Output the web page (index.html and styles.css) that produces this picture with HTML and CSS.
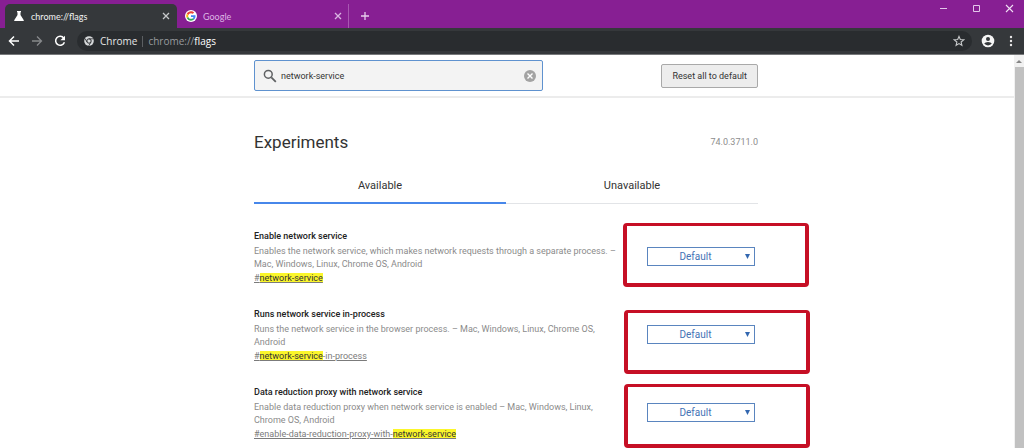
FILE: index.html
```html
<!DOCTYPE html>
<html lang="en">
<head>
<meta charset="utf-8">
<meta name="viewport" content="width=device-width, initial-scale=1">
<title>chrome://flags</title>
<link rel="stylesheet" href="styles.css">
</head>
<body>
<div class="window">
  <header class="tabstrip">
    <div class="tab tab-active">
      <svg class="tab-icon" viewBox="0 0 12 12"><path d="M4 1h4v1.200H7.500V5l3.300 5.200q.4.800-.5.800H1.700q-.9 0-.5-.8L4.500 5V2.200H4z" fill="#fff"/></svg>
      <span class="tab-title">chrome://flags</span>
      <button class="tab-close" aria-label="Close tab"><svg viewBox="0 0 8 8"><path d="M1 1l6 6M7 1L1 7" stroke="#c6c8ca" stroke-width="1.300"/></svg></button>
    </div>
    <div class="tab tab-google">
      <svg class="tab-icon" viewBox="0 0 48 48"><circle cx="24" cy="24" r="24" fill="#fff"/><g transform="translate(5 5) scale(.79)"><path fill="#ea4335" d="M24 9.500c3.500 0 6.700 1.200 9.200 3.600l6.900-6.900C35.900 2.400 30.500 0 24 0 14.600 0 6.500 5.400 2.600 13.200l8 6.200C12.400 13.700 17.700 9.500 24 9.500z"/><path fill="#4285f4" d="M47 24.600c0-1.600-.2-3.100-.4-4.600H24v9h12.900c-.6 3-2.300 5.500-4.800 7.200l7.700 6C44.400 38 47 31.800 47 24.600z"/><path fill="#fbbc05" d="M10.500 28.600a14.500 14.500 0 0 1 0-9.200l-8-6.200a24 24 0 0 0 0 21.600z"/><path fill="#34a853" d="M24 48c6.500 0 11.900-2.100 15.900-5.800l-7.700-6c-2.200 1.500-4.900 2.300-8.200 2.300-6.300 0-11.600-4.200-13.500-9.900l-8 6.200C6.500 42.600 14.600 48 24 48z"/></g></svg>
      <span class="tab-title">Google</span>
      <button class="tab-close" aria-label="Close tab"><svg viewBox="0 0 8 8"><path d="M1 1l6 6M7 1L1 7" stroke="#d9b5e2" stroke-width="1.300"/></svg></button>
    </div>
    <button class="new-tab" aria-label="New tab"><svg viewBox="0 0 10 10"><path d="M5 1v8M1 5h8" stroke="#e6cdec" stroke-width="1.300"/></svg></button>
    <div class="window-controls">
      <button aria-label="Minimize"><svg viewBox="0 0 9 9"><path d="M1 4.500h7" stroke="#e3c6ea"/></svg></button>
      <button aria-label="Maximize"><svg viewBox="0 0 9 9"><path d="M1.500 1.500h6v6h-6z" fill="none" stroke="#e3c6ea"/></svg></button>
      <button aria-label="Close window"><svg viewBox="0 0 9 9"><path d="M1 1l7 7M8 1L1 8" stroke="#f0dff4" stroke-width="1.100"/></svg></button>
    </div>
  </header>

  <nav class="toolbar">
    <button class="nav-button" aria-label="Back"><svg viewBox="0 0 12 12"><path d="M11 6H2M6 1.500L1.500 6 6 10.500" fill="none" stroke="#fff" stroke-width="1.500"/></svg></button>
    <button class="nav-button" aria-label="Forward"><svg viewBox="0 0 12 12"><path d="M1 6h9M6 1.500L10.500 6 6 10.500" fill="none" stroke="#86898b" stroke-width="1.300"/></svg></button>
    <button class="nav-button" aria-label="Reload"><svg viewBox="0 0 12 12"><path d="M9.800 3.200A4.500 4.500 0 1 0 10.400 7.300" fill="none" stroke="#fff" stroke-width="1.500"/><path d="M11 .7v4.600H6.400z" fill="#fff"/></svg></button>
    <div class="omnibox">
      <svg class="site-icon" viewBox="0 0 12 12"><circle cx="6" cy="6" r="4.800" fill="#d6d8da"/><circle cx="6" cy="6" r="2.200" fill="#d6d8da" stroke="#292c2f" stroke-width="1"/><path d="M6 3.800h4.400M4.100 7.100L1.900 3.400M7.900 7.100L5.800 10.700" stroke="#292c2f" stroke-width=".8"/></svg>
      <span class="site-name">Chrome</span>
      <span class="omnibox-rule"></span>
      <span class="url">chrome://<span class="url-host">flags</span></span>
      <button class="star" aria-label="Bookmark this tab"><svg viewBox="0 0 12 12"><path d="M6 1.400l1.300 3.100 3.400.3-2.600 2.200.8 3.300L6 8.600l-2.900 1.700.8-3.300L1.300 4.800l3.400-.3z" fill="none" stroke="#c7c9cb" stroke-width="1.100"/></svg></button>
    </div>
    <button class="profile" aria-label="Profile"><svg viewBox="0 0 14 14"><circle cx="7" cy="7" r="6.300" fill="#f5f5f5"/><circle cx="7" cy="4.900" r="2" fill="#35383b"/><path d="M3.200 9.600Q4.200 8 7 8t3.800 1.600Q9.500 11.400 7 11.400T3.200 9.600z" fill="#35383b"/></svg></button>
    <button class="menu" aria-label="Menu"><svg viewBox="0 0 4 12"><g fill="#e8e8e8"><circle cx="2" cy="2" r="1.200"/><circle cx="2" cy="6" r="1.200"/><circle cx="2" cy="10" r="1.200"/></g></svg></button>
  </nav>

  <div class="viewport">
    <main class="page">
      <div class="page-header">
        <div class="column header-row">
          <div class="search">
            <svg class="search-icon" viewBox="0 0 14 14"><circle cx="5.300" cy="5.300" r="3.900" fill="none" stroke="#5f6163" stroke-width="1.500"/><path d="M8.300 8.300l4.500 4.500" stroke="#5f6163" stroke-width="1.800"/></svg>
            <input class="search-input" type="text" aria-label="Search flags" value="network-service">
            <button class="clear" aria-label="Clear search"><svg viewBox="0 0 12 12"><circle cx="6" cy="6" r="6" fill="#a3a3a3"/><path d="M3.500 3.500l5 5M8.500 3.500l-5 5" stroke="#fff" stroke-width="1.400"/></svg></button>
          </div>
          <button class="reset">Reset all to default</button>
        </div>
      </div>

      <div class="column">
        <div class="heading-row">
          <h1 class="heading">Experiments</h1>
          <span class="version">74.0.3711.0</span>
        </div>
        <div class="flag-tabs" role="tablist">
          <button class="flag-tab flag-tab-selected" role="tab" aria-selected="true">Available</button>
          <button class="flag-tab" role="tab" aria-selected="false">Unavailable</button>
        </div>

        <div class="flags">
          <section class="flag">
            <div class="flag-text">
              <h2 class="flag-title" id="flag-1">Enable network service</h2>
              <p class="flag-description">Enables the network service, which makes network requests through a separate process. – Mac, Windows, Linux, Chrome OS, Android</p>
              <a class="flag-link" href="#network-service">#<mark>network-service</mark></a>
            </div>
            <div class="flag-choice">
              <select class="flag-select" aria-labelledby="flag-1"><option>Default</option><option>Enabled</option><option>Disabled</option></select>
              <svg class="arrow" viewBox="0 0 5 5"><path d="M0 0h5L2.500 5z" fill="#3367b0"/></svg>
              <span class="highlight highlight-first"></span>
            </div>
          </section>
          <section class="flag">
            <div class="flag-text">
              <h2 class="flag-title" id="flag-2">Runs network service in-process</h2>
              <p class="flag-description">Runs the network service in the browser process. – Mac, Windows, Linux, Chrome OS, Android</p>
              <a class="flag-link" href="#network-service-in-process">#<mark>network-service</mark>-in-process</a>
            </div>
            <div class="flag-choice">
              <select class="flag-select" aria-labelledby="flag-2"><option>Default</option><option>Enabled</option><option>Disabled</option></select>
              <svg class="arrow" viewBox="0 0 5 5"><path d="M0 0h5L2.500 5z" fill="#3367b0"/></svg>
              <span class="highlight highlight-second"></span>
            </div>
          </section>
          <section class="flag">
            <div class="flag-text">
              <h2 class="flag-title" id="flag-3">Data reduction proxy with network service</h2>
              <p class="flag-description">Enable data reduction proxy when network service is enabled – Mac, Windows, Linux, Chrome OS, Android</p>
              <a class="flag-link" href="#enable-data-reduction-proxy-with-network-service">#enable-data-reduction-proxy-with-<mark>network-service</mark></a>
            </div>
            <div class="flag-choice">
              <select class="flag-select" aria-labelledby="flag-3"><option>Default</option><option>Enabled</option><option>Disabled</option></select>
              <svg class="arrow" viewBox="0 0 5 5"><path d="M0 0h5L2.500 5z" fill="#3367b0"/></svg>
              <span class="highlight highlight-third"></span>
            </div>
          </section>
        </div>
      </div>
    </main>
    <div class="scrollbar">
      <svg class="scroll-up" viewBox="0 0 10 12"><path d="M2 8l3-3 3 3z" fill="#858585"/></svg>
      <div class="scroll-thumb"></div>
    </div>
  </div>
</div>
</body>
</html>
```
FILE: styles.css
```css
* { box-sizing: border-box; }

body {
  margin: 0;
  font-family: Roboto, "Liberation Sans", sans-serif;
  font-size: 9px;
  color: #333;
  background: #fff;
}

button {
  padding: 0;
  border: 0;
  background: none;
  font: inherit;
  color: inherit;
}

svg { display: block; }

.window {
  display: flex;
  flex-direction: column;
  height: 100vh;
  overflow: hidden;
}

/* Tab strip */
.tabstrip {
  display: flex;
  flex: none;
  align-items: flex-end;
  height: 28px;
  background: #871f93;
  font-family: Lato, "Open Sans", sans-serif;
}

.tab {
  display: flex;
  align-items: center;
  height: 24px;
  gap: 6px;
}

.tab-active {
  width: 172px;
  margin-left: 5px;
  padding: 0 7px 0 8px;
  border-radius: 5px 5px 0 0;
  background: #35383b;
  color: #f2f2f2;
}

.tab-google {
  width: 172px;
  padding: 0 6px 0 8px;
  border-right: 1px solid #a857b2;
  color: #dcb5e3;
}

.tab-icon { width: 12px; height: 12px; }

.tab-title { flex: 1; }

.tab-close svg { width: 8px; height: 8px; }

.new-tab {
  align-self: center;
  margin: 4px 0 0 11px;
}

.new-tab svg { width: 10px; height: 10px; }

.window-controls {
  display: flex;
  align-self: flex-start;
  gap: 24px;
  margin-left: auto;
  padding: 4px 10px 0 0;
}

.window-controls svg { width: 9px; height: 9px; }

/* Toolbar */
.toolbar {
  display: flex;
  flex: none;
  align-items: center;
  height: 27px;
  padding: 0 11px 0 8px;
  border-bottom: 1px solid #77797b;
  background: #35383b;
  font-family: "Open Sans", "Noto Sans", sans-serif;
}

.nav-button { margin-right: 11px; }

.nav-button svg { width: 12px; height: 12px; }

.omnibox {
  display: flex;
  flex: 1;
  align-items: center;
  height: 20px;
  padding: 0 7px 0 6px;
  border-radius: 10px;
  background: #292c2f;
  font-size: 10px;
  color: #e5e6e7;
}

.site-icon { width: 12px; height: 12px; margin-right: 5px; }

.omnibox-rule {
  width: 1px;
  height: 11px;
  margin: 0 5px;
  background: #5c5f62;
}

.url { flex: 1; color: #989b9e; }

.url-host { color: #fff; }

.star svg { width: 12px; height: 12px; }

.profile { margin-left: 9px; }

.profile svg { width: 14px; height: 14px; }

.menu { margin-left: 14px; }

.menu svg { width: 4px; height: 12px; }

/* Page */
.viewport {
  display: flex;
  flex: 1;
  min-height: 0;
}

.page {
  flex: 1;
  min-width: 0;
  overflow: hidden;
}

.column {
  max-width: 506px;
  margin: 0 auto;
  padding-right: 2px;
}

.page-header {
  padding: 5px 0;
  border-bottom: 2px solid #ececec;
}

.header-row {
  display: flex;
  align-items: center;
  justify-content: space-between;
}

.search {
  display: flex;
  align-items: center;
  width: 289px;
  height: 31px;
  padding: 0 6px 0 8px;
  border: 1px solid #5f92cf;
  border-radius: 2px;
  background: #f3f3f3;
}

.search-icon { flex: none; width: 14px; height: 14px; }

.search-input {
  flex: 1;
  min-width: 0;
  padding: 0 4px;
  border: 0;
  outline: 0;
  background: none;
  font: inherit;
  color: #333;
}

.clear svg { width: 12px; height: 12px; }

.reset {
  height: 24px;
  padding: 0 10px;
  border: 1px solid #a9a9a9;
  border-radius: 2px;
  background: #ededed;
}

.heading-row {
  display: flex;
  align-items: center;
  justify-content: space-between;
  padding-top: 32px;
}

.heading {
  margin: 0;
  font-size: 17px;
  font-weight: 400;
  line-height: 24px;
}

.version { color: #8d8d8d; }

.flag-tabs {
  display: flex;
  margin-top: 14px;
}

.flag-tab {
  flex: 1;
  height: 36px;
  border-bottom: 1px solid #e2e4e7;
  font-size: 11px;
}

.flag-tab-selected { border-bottom: 2px solid #4787ea; }

.flags {
  display: grid;
  gap: 22px;
  padding-top: 25px;
}

.flag {
  display: flex;
  justify-content: space-between;
}

.flag-text { width: 366px; }

.flag-title {
  margin: 0 0 1px;
  font-size: 9px;
  font-weight: 500;
  line-height: 15px;
  color: #222;
}

.flag-description {
  margin: 0;
  line-height: 13px;
  color: #8b8b8b;
}

.flag-link {
  display: block;
  width: fit-content;
  line-height: 14px;
  color: #7b7b7b;
}

.flag-link mark {
  background: #fbf62b;
  color: #333;
}

.flag-choice {
  position: relative;
  width: 108px;
  margin: 18px 3px 0 0;
  align-self: flex-start;
}

.flag-select {
  display: block;
  width: 100%;
  height: 19px;
  padding: 0 11px 0 0;
  border: 1px solid #5a85bf;
  border-radius: 0;
  appearance: none;
  background: #fff;
  font: inherit;
  font-size: 10px;
  color: #4573b5;
  text-align: center;
  text-align-last: center;
}

.arrow {
  position: absolute;
  top: 7px;
  right: 5px;
  width: 5px;
  height: 5px;
}

/* Red marker frames drawn over the page */
.highlight {
  position: absolute;
  left: -23px;
  width: 186px;
  height: 64px;
  border: 4px solid #c60f25;
  border-top-width: 3px;
  border-radius: 4px;
  pointer-events: none;
}

.highlight-first { top: -24px; left: -24px; }

.highlight-second { top: -15px; }

.highlight-third { top: -19px; }

/* Scrollbar */
.scrollbar {
  flex: none;
  width: 10px;
  display: flex;
  flex-direction: column;
  background: #f1f1f1;
}

.scroll-up { width: 10px; height: 12px; }

.scroll-thumb {
  flex: 1;
  margin: 0 0 0 1px;
  background: #c1c1c1;
}
```
